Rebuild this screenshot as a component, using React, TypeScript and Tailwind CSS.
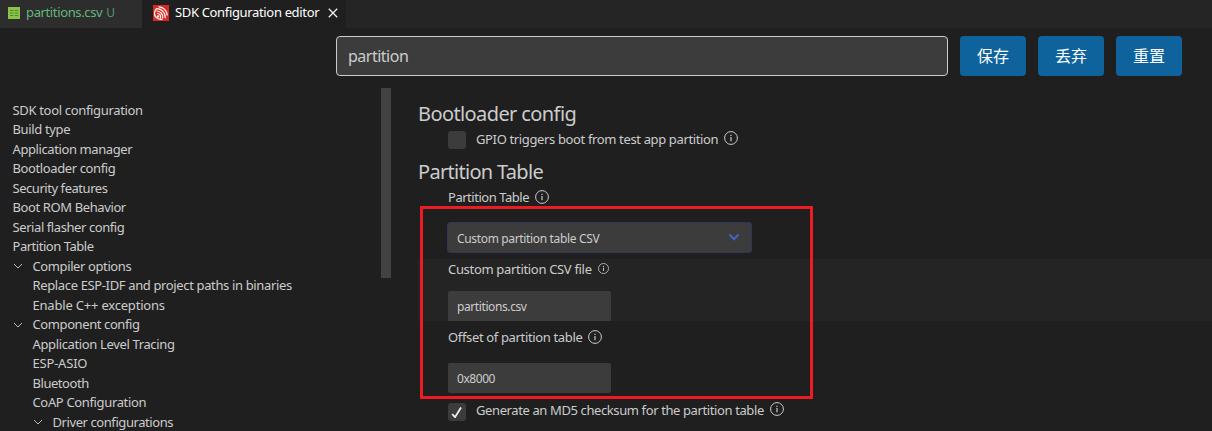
import React from "react";

type IconProps = { className?: string };

const InfoIcon = ({ className = "" }: IconProps) => (
  <svg viewBox="0 0 14 14" className={`shrink-0 ${className}`} fill="none" stroke="#cccccc">
    <circle cx="7" cy="7" r="6.4" strokeWidth="1" />
    <path d="M7 6v4.2" strokeWidth="1.2" />
    <path d="M7 3.7v1.3" strokeWidth="1.2" />
  </svg>
);

const Chevron = ({ className = "" }: IconProps) => (
  <svg viewBox="0 0 10 6" className={`h-1.5 w-2.5 shrink-0 ${className}`} fill="none" stroke="#b8b8b8">
    <path d="M1 1l4 4 4-4" />
  </svg>
);

const TableIcon = () => (
  <svg viewBox="0 0 12 12" className="h-3 w-3 shrink-0">
    <rect width="12" height="12" fill="#8bc34a" />
    <path d="M2 3.5h3.5M6.8 3.5h3.5M2 6h3.5M6.8 6h3.5M2 8.5h3.5M6.8 8.5h3.5" stroke="#4f8a2c" strokeWidth="1.1" />
  </svg>
);

const EspressifIcon = () => (
  <svg viewBox="0 0 16 16" className="h-4 w-4 shrink-0" fill="none">
    <rect width="16" height="16" fill="#d8281f" />
    <g stroke="#ffffff" strokeWidth="1.25" strokeLinecap="round">
      <path d="M6 1.8A9 9 0 0 1 14.2 10" />
      <path d="M4 3.6A8.6 8.6 0 0 1 12.3 12.6" />
      <path d="M4 6A6.2 6.2 0 0 1 9.8 13" />
      <path d="M4.8 8.5A3.8 3.8 0 0 1 7.5 12.8" />
      <path d="M3.4 3.8A6.3 6.3 0 0 0 3 12.4Q5.5 14.8 9 14.3" />
    </g>
    <circle cx="5" cy="11.4" r="1.2" fill="#ffffff" />
  </svg>
);

type Item = { label: string; pad: string; track: string; chevron?: boolean };

const items: Item[] = [
  { label: "SDK tool configuration", pad: "pl-3", track: "tracking-[-0.33px]" },
  { label: "Build type", pad: "pl-3", track: "tracking-[-0.35px]" },
  { label: "Application manager", pad: "pl-3", track: "tracking-[-0.4px]" },
  { label: "Bootloader config", pad: "pl-3", track: "tracking-[-0.39px]" },
  { label: "Security features", pad: "pl-3", track: "tracking-[-0.45px]" },
  { label: "Boot ROM Behavior", pad: "pl-3", track: "tracking-[-0.39px]" },
  { label: "Serial flasher config", pad: "pl-3", track: "tracking-[-0.42px]" },
  { label: "Partition Table", pad: "pl-3", track: "tracking-[-0.47px]" },
  { label: "Compiler options", pad: "pl-3", track: "tracking-[-0.39px]", chevron: true },
  { label: "Replace ESP-IDF and project paths in binaries", pad: "pl-8", track: "tracking-[-0.36px]" },
  { label: "Enable C++ exceptions", pad: "pl-8", track: "tracking-[-0.2px]" },
  { label: "Component config", pad: "pl-3", track: "tracking-[-0.4px]", chevron: true },
  { label: "Application Level Tracing", pad: "pl-8", track: "tracking-[-0.36px]" },
  { label: "ESP-ASIO", pad: "pl-8", track: "tracking-[-0.2px]" },
  { label: "Bluetooth", pad: "pl-8", track: "tracking-[-0.45px]" },
  { label: "CoAP Configuration", pad: "pl-8", track: "tracking-[-0.35px]" },
  { label: "Driver configurations", pad: "pl-8", track: "tracking-[-0.42px]", chevron: true },
];

const buttons = ["保存", "丢弃", "重置"];

export default function App() {
  return (
    <div className="relative flex h-[431px] w-[1212px] flex-col overflow-hidden whitespace-nowrap bg-[#1f1f1f] font-['Noto_Sans','Noto_Sans_CJK_SC',sans-serif] text-[13px] text-[#cccccc]">
      <div className="flex h-7 shrink-0 bg-[#252525]">
        <div className="flex w-[142px] items-center bg-[#2d2d2d] pb-[3px] pl-2 text-[#62b87c]">
          <TableIcon />
          <span className="ml-1.5 tracking-[-0.37px]">partitions.csv</span>
          <span className="ml-1 text-[12px] text-[#4f9a68]">U</span>
        </div>
        <div className="flex w-[204px] items-center bg-[#1f1f1f] pb-[3px] pl-[11px] text-white">
          <EspressifIcon />
          <span className="ml-1.5 tracking-[-0.34px]">SDK Configuration editor</span>
          <svg viewBox="0 0 10 10" className="ml-auto mr-2 h-2.5 w-2.5" stroke="#f0f0f0" strokeWidth="1.3">
            <path d="M.8.8l8.4 8.4M9.2.8L.8 9.2" />
          </svg>
        </div>
      </div>

      <div className="flex h-[60px] shrink-0 gap-3 pl-[336px] pt-2">
        <div className="flex h-10 w-[612px] items-center rounded border border-[#cccccc] bg-[#3c3c3c] pl-[11px] text-base tracking-[-0.5px]">
          partition
        </div>
        {buttons.map((label) => (
          <button key={label} className="h-10 w-[66px] rounded bg-[#0e639c] text-base text-white">
            {label}
          </button>
        ))}
      </div>

      <div className="flex min-h-0 flex-1">
        <nav className="w-[381px] shrink-0 pl-[0.5px] pt-[12.5px]">
          {items.map((item) => (
            <div key={item.label} className={`flex h-[19.5px] items-center ${item.pad}`}>
              {item.chevron && <Chevron className="mr-2.5" />}
              <span className={item.track}>{item.label}</span>
            </div>
          ))}
        </nav>
        <div className="h-[190px] w-2.5 shrink-0 bg-[#424242]" />

        <main className="ml-[27px] flex-1">
          <h2 className="mt-3 h-[30px] text-xl leading-[28px] tracking-[-0.6px]">Bootloader config</h2>
          <div className="flex h-[22px] pl-[30px]">
            <div className="mt-px h-[18px] w-[18px] rounded-[3px] bg-[#3c3c3c]" />
            <span className="ml-2.5 leading-[18px] tracking-[-0.36px]">GPIO triggers boot from test app partition</span>
            <InfoIcon className="ml-1.5 mt-px h-3.5 w-3.5" />
          </div>
          <h2 className="mt-1.5 h-[30px] text-xl leading-[28px] tracking-[-0.7px]">Partition Table</h2>
          <div className="flex h-[34px] pl-[30px]">
            <span className="leading-[18px] tracking-[-0.47px]">Partition Table</span>
            <InfoIcon className="ml-1.5 mt-0.5 h-3.5 w-3.5" />
          </div>
          <div className="ml-[29px] flex h-[31px] w-[305px] items-center justify-between rounded-[3px] border border-[#30365a] bg-[#3c3c3c] pl-[9px] pr-3 text-[12px]">
            <span className="pt-0.5 tracking-[-0.34px]">Custom partition table CSV</span>
            <svg viewBox="0 0 10 7" className="h-[7px] w-2.5" fill="none" stroke="#485fc7" strokeWidth="2" strokeLinecap="round">
              <path d="M1 1l4 4.2L9 1" />
            </svg>
          </div>
          <div className="mt-1.5 h-[62px] bg-[#242424] pl-[30px]">
            <div className="flex h-8 pt-px">
              <span className="leading-[19px] tracking-[-0.32px]">Custom partition CSV file</span>
              <InfoIcon className="ml-1.5 mt-[3px] h-[11px] w-[11px]" />
            </div>
            <div className="h-[30px] w-[163px] rounded-t-[2px] bg-[#3c3c3c] pl-[9px] text-[12px] leading-[31px] tracking-[-0.4px]">
              partitions.csv
            </div>
          </div>
          <div className="pl-[30px]">
            <div className="flex h-[42px] pt-[7px]">
              <span className="leading-[19px] tracking-[-0.35px]">Offset of partition table</span>
              <InfoIcon className="ml-1.5 mt-0.5 h-3.5 w-3.5" />
            </div>
            <div className="h-[30px] w-[163px] rounded-[2px] bg-[#3c3c3c] pl-[9px] text-[12px] leading-[31px] tracking-[-0.45px]">
              0x8000
            </div>
            <div className="mt-2 flex">
              <div className="mt-0.5 flex h-[18px] w-[18px] items-center justify-center rounded-[3px] bg-[#3c3c3c]">
                <svg viewBox="0 0 12 12" className="h-3 w-3" fill="none" stroke="#f0f0f0" strokeWidth="1.8">
                  <path d="M1.2 8l2.8 3.2L10 1.5" />
                </svg>
              </div>
              <span className="ml-2.5 leading-[19px] tracking-[-0.39px]">Generate an MD5 checksum for the partition table</span>
              <InfoIcon className="ml-1.5 mt-px h-3.5 w-3.5" />
            </div>
          </div>
        </main>
      </div>

      <div className="absolute left-[420px] top-[206px] h-[193px] w-[393px] border-[3px] border-[#ed1c24]" />
    </div>
  );
}
